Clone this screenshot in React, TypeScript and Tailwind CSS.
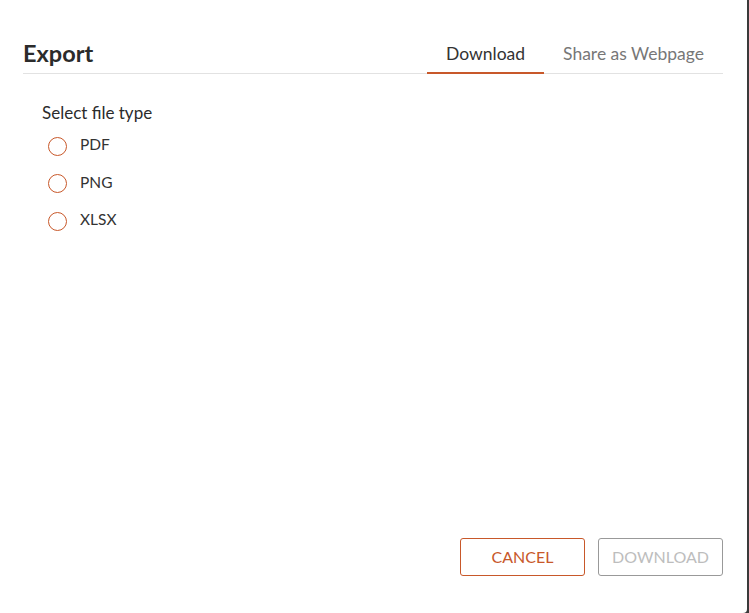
import { useState } from "react";

const fileTypes = ["PDF", "PNG", "XLSX"];

export default function App() {
  const [tab, setTab] = useState("download");
  const [fileType, setFileType] = useState<string | null>(null);

  return (
    <div className="w-[749px] h-[613px] bg-[#3a3a3a] font-['Lato','Noto_Sans',sans-serif]">
      <div className="w-[747px] h-[613px] bg-white rounded-br-[4px] flex flex-col pl-[23px] pr-[24px]">

        {/* Header with tabs */}
        <div className="mt-[35px] flex items-end justify-between border-b border-[#e2e2e2]">
          <h2 className="text-[23.5px] leading-[36px] pb-[2px] font-bold text-[#2b2b2b]">Export</h2>
          <div className="flex">
            <button
              onClick={() => setTab("download")}
              className={
                tab === "download"
                  ? "px-[19px] -mb-px h-[38px] text-[17.5px] text-[#333] border-b-2 border-[#c8582a]"
                  : "px-[19px] -mb-px h-[38px] text-[17.5px] text-[#777] border-b-2 border-transparent"
              }
            >
              Download
            </button>
            <button
              onClick={() => setTab("share")}
              className={
                tab === "share"
                  ? "px-[19px] -mb-px h-[38px] text-[17.5px] text-[#333] border-b-2 border-[#c8582a]"
                  : "px-[19px] -mb-px h-[38px] text-[17.5px] text-[#777] border-b-2 border-transparent"
              }
            >
              Share as Webpage
            </button>
          </div>
        </div>

        {/* File type choice */}
        <div className="pl-[19px] pt-[27px] flex-1">
          <p className="text-[17px] leading-[24px] text-[#2b2b2b]">Select file type</p>
          <div className="mt-[1px] flex flex-col">
            {fileTypes.map((t) => (
              <label key={t} className="flex items-center h-[37.5px] cursor-pointer">
                <span className="ml-[6px] mt-[3px] w-[19px] h-[19px] rounded-full border border-[#c8582a] flex items-center justify-center">
                  {fileType === t && <span className="w-[9px] h-[9px] rounded-full bg-[#c8582a]" />}
                </span>
                <input
                  type="radio"
                  name="filetype"
                  className="hidden"
                  checked={fileType === t}
                  onChange={() => setFileType(t)}
                />
                <span className="ml-[13px] text-[15.5px] text-[#333]">{t}</span>
              </label>
            ))}
          </div>
        </div>

        {/* Actions */}
        <div className="flex justify-end gap-[13px] pb-[37px]">
          <button className="w-[125px] h-[38px] rounded-[3px] border border-[#c8582a] text-[#c8582a] text-[16px] uppercase">
            Cancel
          </button>
          <button
            disabled={!fileType}
            className="w-[125px] h-[38px] rounded-[3px] border border-[#999] text-[#bdbdbd] text-[16px] uppercase"
          >
            Download
          </button>
        </div>
      </div>
    </div>
  );
}
